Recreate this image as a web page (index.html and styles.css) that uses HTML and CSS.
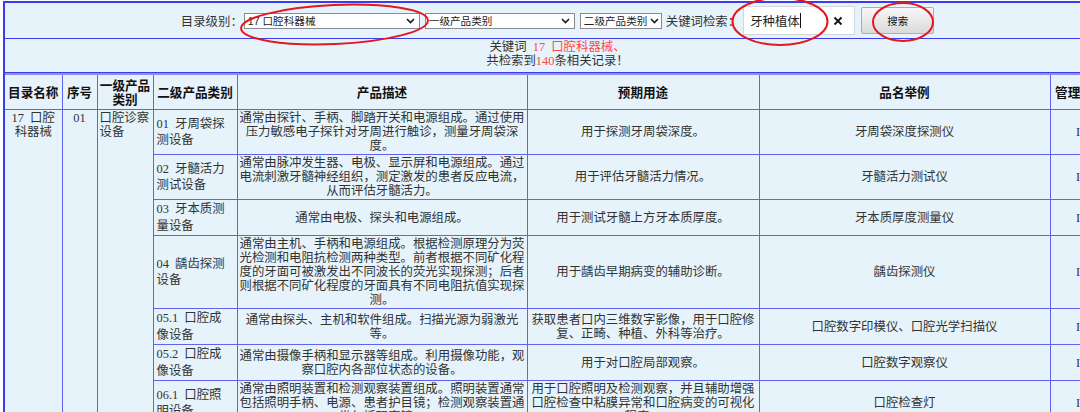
FILE: index.html
```html
<!DOCTYPE html>
<html lang="zh-CN">
<head>
<meta charset="utf-8">
<title>医疗器械分类目录查询</title>
<link rel="stylesheet" href="styles.css">
</head>
<body>
<div class="page">
  <form class="search-bar">
    <label class="lbl lbl-level">目录级别：</label>
    <div class="sel sel-1">
      <select><option>17 口腔科器械</option></select>
      <svg class="chev" viewBox="0 0 9 6"><path d="M1 1l3.5 3.5L8 1" fill="none" stroke="#1a1a1a" stroke-width="1.6"/></svg>
    </div>
    <div class="sel sel-2">
      <select><option>一级产品类别</option></select>
      <svg class="chev" viewBox="0 0 9 6"><path d="M1 1l3.5 3.5L8 1" fill="none" stroke="#1a1a1a" stroke-width="1.6"/></svg>
    </div>
    <div class="sel sel-3">
      <select><option>二级产品类别</option></select>
      <svg class="chev" viewBox="0 0 9 6"><path d="M1 1l3.5 3.5L8 1" fill="none" stroke="#1a1a1a" stroke-width="1.6"/></svg>
    </div>
    <label class="lbl lbl-kw">关键词检索：</label>
    <div class="kw">
      <span class="kw-text">牙种植体</span><span class="caret"></span>
      <svg class="clear" viewBox="0 0 10 10"><path d="M1.5 1.5L8.5 8.5M8.5 1.5L1.5 8.5" stroke="#111" stroke-width="1.8"/></svg>
    </div>
    <button type="button" class="btn">搜索</button>
  </form>

  <div class="result">
    <div>关键词 <span class="hl">17 口腔科器械、</span></div>
    <div>共检索到<span class="hl">140</span>条相关记录！</div>
  </div>

  <div class="table-box">
    <table class="cat">
      <colgroup>
        <col class="w-name"><col class="w-seq"><col class="w-l1"><col class="w-l2">
        <col class="w-desc"><col class="w-use"><col class="w-ex"><col class="w-cls">
      </colgroup>
      <thead>
        <tr>
          <th>目录名称</th><th>序号</th><th>一级产品类别</th><th>二级产品类别</th>
          <th>产品描述</th><th>预期用途</th><th>品名举例</th><th>管理类别</th>
        </tr>
      </thead>
      <tbody>
        <tr>
          <td rowspan="7" class="c-name">17 口腔科器械</td>
          <td rowspan="7" class="c-seq">01</td>
          <td rowspan="7" class="c-l1">口腔诊察设备</td>
          <td class="c-l2">01 牙周袋探测设备</td>
          <td class="c-desc">通常由探针、手柄、脚踏开关和电源组成。通过使用压力敏感电子探针对牙周进行触诊，测量牙周袋深度。</td>
          <td class="c-use">用于探测牙周袋深度。</td>
          <td>牙周袋深度探测仪</td>
          <td>II</td>
        </tr>
        <tr>
          <td class="c-l2">02 牙髓活力测试设备</td>
          <td class="c-desc">通常由脉冲发生器、电极、显示屏和电源组成。通过电流刺激牙髓神经组织，测定激发的患者反应电流，从而评估牙髓活力。</td>
          <td class="c-use">用于评估牙髓活力情况。</td>
          <td>牙髓活力测试仪</td>
          <td>II</td>
        </tr>
        <tr>
          <td class="c-l2">03 牙本质测量设备</td>
          <td class="c-desc">通常由电极、探头和电源组成。</td>
          <td class="c-use">用于测试牙髓上方牙本质厚度。</td>
          <td>牙本质厚度测量仪</td>
          <td>II</td>
        </tr>
        <tr>
          <td class="c-l2">04 龋齿探测设备</td>
          <td class="c-desc">通常由主机、手柄和电源组成。根据检测原理分为荧光检测和电阻抗检测两种类型。前者根据不同矿化程度的牙面可被激发出不同波长的荧光实现探测；后者则根据不同矿化程度的牙面具有不同电阻抗值实现探测。</td>
          <td class="c-use">用于龋齿早期病变的辅助诊断。</td>
          <td>龋齿探测仪</td>
          <td>II</td>
        </tr>
        <tr>
          <td class="c-l2">05.1 口腔成像设备</td>
          <td class="c-desc">通常由探头、主机和软件组成。扫描光源为弱激光等。</td>
          <td class="c-use">获取患者口内三维数字影像，用于口腔修复、正畸、种植、外科等治疗。</td>
          <td>口腔数字印模仪、口腔光学扫描仪</td>
          <td>II</td>
        </tr>
        <tr>
          <td class="c-l2">05.2 口腔成像设备</td>
          <td class="c-desc">通常由摄像手柄和显示器等组成。利用摄像功能，观察口腔内各部位状态的设备。</td>
          <td class="c-use">用于对口腔局部观察。</td>
          <td>口腔数字观察仪</td>
          <td>II</td>
        </tr>
        <tr>
          <td class="c-l2">06.1 口腔照明设备</td>
          <td class="c-desc">通常由照明装置和检测观察装置组成。照明装置通常包括照明手柄、电源、患者护目镜；检测观察装置通常包括观察镜。</td>
          <td class="c-use">用于口腔照明及检测观察，并且辅助增强口腔检查中粘膜异常和口腔病变的可视化程度。</td>
          <td>口腔检查灯</td>
          <td>II</td>
        </tr>
      </tbody>
    </table>
  </div>

  <svg class="marks" width="1110" height="50" viewBox="0 0 1110 50">
    <ellipse cx="334.5" cy="24.5" rx="93.5" ry="19.5" transform="rotate(-2.5 334.5 24.5)"/>
    <ellipse cx="780" cy="21.5" rx="47.5" ry="23.5"/>
    <ellipse cx="903" cy="22" rx="30" ry="19"/>
  </svg>
</div>
</body>
</html>
```

FILE: styles.css
```css
html, body {
  margin: 0;
  padding: 0;
  overflow: hidden;
  background: #ffffff;
}

body {
  padding: 1px 0 0 3px;
}

.page {
  position: relative;
  width: 1105px;
  border-left: 2px solid #3b3bf0;
  background: #e6f3fb;
  font-family: "Noto Sans CJK SC", sans-serif;
  color: #333;
}

/* ---------- search bar ---------- */
.search-bar {
  margin: 0;
  height: 35px;
  border-top: 2px solid #3b3bf0;
  border-bottom: 1px solid #3b3bf0;
  display: flex;
  align-items: center;
  justify-content: center;
  font-size: 12.4px;
}

.lbl {
  line-height: 14px;
  white-space: nowrap;
  color: #333;
}

.lbl-level { margin-right: 1px; }
.lbl-kw { margin-left: 4px; margin-right: 3px; }

.sel {
  box-sizing: border-box;
  height: 16px;
  display: flex;
  align-items: center;
  background: #fff;
  border: 1px solid #8a8a96;
}

.sel-1 { width: 176px; }
.sel-2 { width: 150px; margin-left: 5px; }
.sel-3 { width: 82px; margin-left: 5px; }

.sel select {
  appearance: none;
  -webkit-appearance: none;
  flex: 1;
  min-width: 0;
  height: 14px;
  margin: 0;
  padding: 0 0 0 3px;
  border: 0;
  outline: none;
  background: transparent;
  font-family: "Liberation Sans", "Noto Sans CJK SC", sans-serif;
  font-size: 10.6px;
  line-height: 14px;
  color: #222;
}

.chev {
  flex: none;
  width: 9px;
  height: 6px;
  margin-right: 4px;
}

.sel-3 .chev { margin-right: 2px; }

.kw {
  box-sizing: border-box;
  width: 112px;
  height: 29px;
  display: flex;
  align-items: center;
  padding: 0 11px 0 6px;
  background: #fff;
  border: 1px solid #d3d6da;
}

.kw-text {
  font-size: 12.4px;
  line-height: 14px;
  color: #222;
  white-space: nowrap;
}

.caret {
  width: 0;
  height: 15px;
  border-left: 1px solid #111;
}

.clear {
  width: 10px;
  height: 10px;
  margin-left: auto;
}

.btn {
  box-sizing: border-box;
  width: 73px;
  height: 27px;
  margin-left: 6px;
  padding: 0;
  border: 1px solid #adadad;
  border-radius: 2px;
  background: linear-gradient(#f7f7f7, #dadada);
  font-family: "Noto Sans CJK SC", sans-serif;
  font-size: 10.4px;
  color: #111;
}

/* ---------- result summary ---------- */
.result {
  height: 32px;
  padding-top: 1px;
  border-bottom: 1px solid #3b3bf0;
  text-align: center;
  font-family: "Liberation Serif", "Noto Sans CJK SC", sans-serif;
  font-size: 12.4px;
  line-height: 14px;
  word-spacing: 3px;
  color: #333;
}

.hl { color: #ff4848; }

/* ---------- catalogue table ---------- */
.table-box {
  border-top: 2px solid #8d8df5;
}

.cat {
  width: 100%;
  table-layout: fixed;
  border-collapse: collapse;
  border: hidden;
}

.w-name { width: 57px; }
.w-seq  { width: 35px; }
.w-l1   { width: 56px; }
.w-l2   { width: 84px; }
.w-desc { width: 290px; }
.w-use  { width: 232px; }
.w-ex   { width: 291px; }
.w-cls  { width: 60px; }

.cat th,
.cat td {
  border: 1px solid #6262f2;
}

.cat th {
  padding: 4px 1px 2px;
  font-family: "Liberation Sans", "Noto Sans CJK SC", sans-serif;
  font-size: 12.6px;
  font-weight: 700;
  line-height: 14px;
  color: #111;
  text-align: center;
  vertical-align: middle;
}

.cat td {
  padding: 1px;
  font-family: "Liberation Serif", "Noto Sans CJK SC", sans-serif;
  font-size: 12.4px;
  line-height: 14px;
  word-spacing: 3px;
  color: #333;
  text-align: center;
  vertical-align: middle;
}

.cat td.c-name {
  padding: 1px 3px;
  vertical-align: top;
}

.cat td.c-seq {
  vertical-align: top;
}

.cat td.c-l1 {
  padding: 1px 1px 1px 2px;
  text-align: left;
  vertical-align: top;
}

.cat td.c-l2 {
  padding: 1px 7px 1px 3px;
  text-align: left;
  line-height: 16.5px;
}

/* ---------- red annotation rings ---------- */
.marks {
  position: absolute;
  left: -5px;
  top: -1px;
  overflow: visible;
  pointer-events: none;
}

.marks ellipse {
  fill: none;
  stroke: #e3171e;
  stroke-width: 2;
}
```
